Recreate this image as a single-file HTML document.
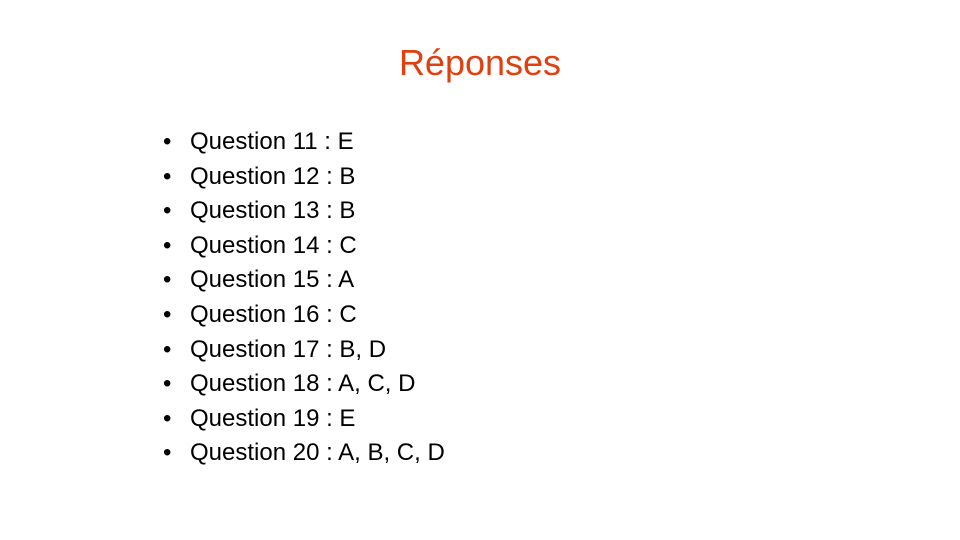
<!DOCTYPE html>
<html><head><meta charset="utf-8"><style>
html,body{margin:0;padding:0;background:#fff;}
body{width:960px;height:540px;position:relative;overflow:hidden;font-family:"Liberation Sans",Arial,sans-serif;}
h1{position:absolute;left:0;width:960px;top:42px;margin:0;text-align:center;font-weight:normal;font-size:36px;line-height:42px;color:#E0400F;}
ul{position:absolute;left:190px;top:125px;margin:0;padding:0;list-style:none;font-size:24px;color:#000;}
li{height:34.6px;line-height:34.6px;position:relative;white-space:nowrap;}
li:before{content:"•";position:absolute;left:-27px;}
</style></head><body>
<h1>Réponses</h1>
<ul>
<li>Question 11 : E</li>
<li>Question 12 : B</li>
<li>Question 13 : B</li>
<li>Question 14 : C</li>
<li>Question 15 : A</li>
<li>Question 16 : C</li>
<li>Question 17 : B, D</li>
<li>Question 18 : A, C, D</li>
<li>Question 19 : E</li>
<li>Question 20 : A, B, C, D</li>
</ul>
</body></html>
